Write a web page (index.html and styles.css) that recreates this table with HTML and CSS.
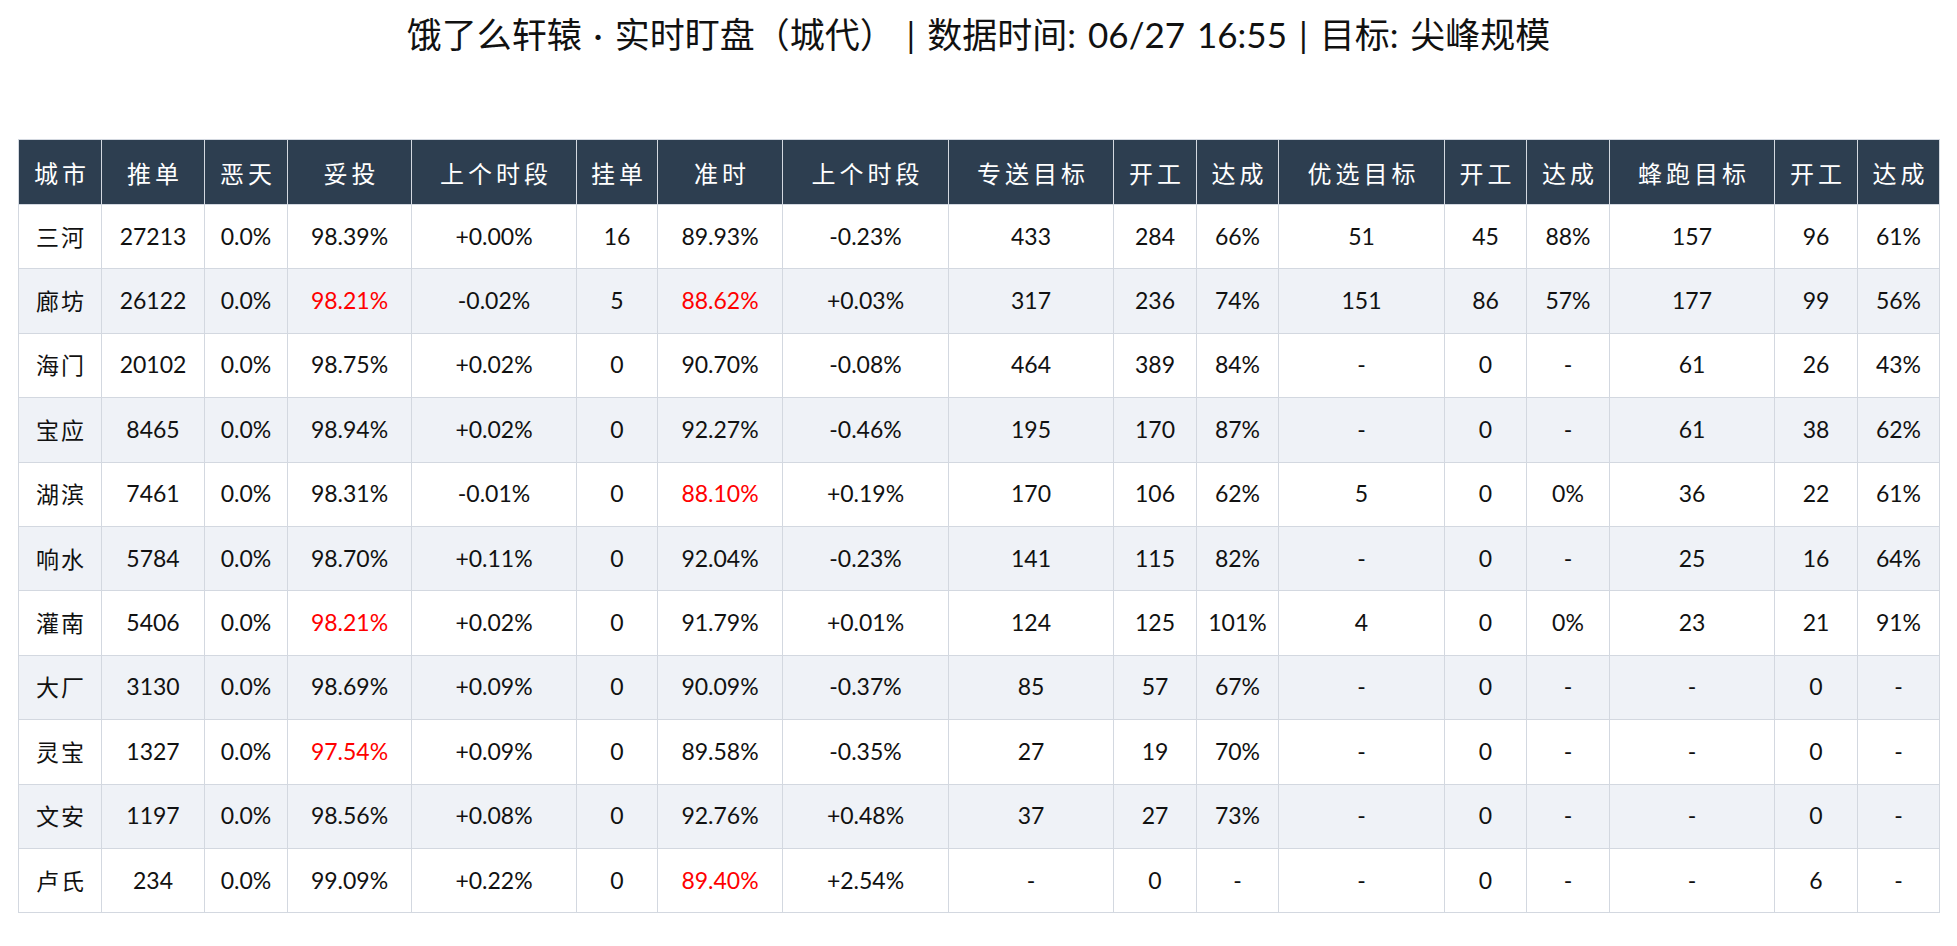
FILE: index.html
```html
<!DOCTYPE html>
<html lang="zh-CN">
<head>
<meta charset="utf-8">
<title>实时盯盘</title>
<link rel="stylesheet" href="styles.css">
</head>
<body>
<div class="page">
  <h1 class="title">饿了么轩辕 · 实时盯盘（城代） | 数据时间: 06/27 16:55 | 目标: 尖峰规模</h1>
  <table class="grid">
    <colgroup>
      <col class="c83"><col class="c103"><col class="c83"><col class="c124"><col class="c165">
      <col class="c81"><col class="c125"><col class="c166"><col class="c165"><col class="c83">
      <col class="c82"><col class="c166"><col class="c82"><col class="c83"><col class="c165">
      <col class="c83"><col class="c82">
    </colgroup>
    <thead>
      <tr>
        <th>城市</th><th>推单</th><th>恶天</th><th>妥投</th><th>上个时段</th><th>挂单</th><th>准时</th><th>上个时段</th><th>专送目标</th><th>开工</th><th>达成</th><th>优选目标</th><th>开工</th><th>达成</th><th>蜂跑目标</th><th>开工</th><th>达成</th>
      </tr>
    </thead>
    <tbody>
      <tr><td class="city">三河</td><td>27213</td><td>0.0%</td><td>98.39%</td><td>+0.00%</td><td>16</td><td>89.93%</td><td>-0.23%</td><td>433</td><td>284</td><td>66%</td><td>51</td><td>45</td><td>88%</td><td>157</td><td>96</td><td>61%</td></tr>
      <tr><td class="city">廊坊</td><td>26122</td><td>0.0%</td><td class="bad">98.21%</td><td>-0.02%</td><td>5</td><td class="bad">88.62%</td><td>+0.03%</td><td>317</td><td>236</td><td>74%</td><td>151</td><td>86</td><td>57%</td><td>177</td><td>99</td><td>56%</td></tr>
      <tr><td class="city">海门</td><td>20102</td><td>0.0%</td><td>98.75%</td><td>+0.02%</td><td>0</td><td>90.70%</td><td>-0.08%</td><td>464</td><td>389</td><td>84%</td><td>-</td><td>0</td><td>-</td><td>61</td><td>26</td><td>43%</td></tr>
      <tr><td class="city">宝应</td><td>8465</td><td>0.0%</td><td>98.94%</td><td>+0.02%</td><td>0</td><td>92.27%</td><td>-0.46%</td><td>195</td><td>170</td><td>87%</td><td>-</td><td>0</td><td>-</td><td>61</td><td>38</td><td>62%</td></tr>
      <tr><td class="city">湖滨</td><td>7461</td><td>0.0%</td><td>98.31%</td><td>-0.01%</td><td>0</td><td class="bad">88.10%</td><td>+0.19%</td><td>170</td><td>106</td><td>62%</td><td>5</td><td>0</td><td>0%</td><td>36</td><td>22</td><td>61%</td></tr>
      <tr><td class="city">响水</td><td>5784</td><td>0.0%</td><td>98.70%</td><td>+0.11%</td><td>0</td><td>92.04%</td><td>-0.23%</td><td>141</td><td>115</td><td>82%</td><td>-</td><td>0</td><td>-</td><td>25</td><td>16</td><td>64%</td></tr>
      <tr><td class="city">灌南</td><td>5406</td><td>0.0%</td><td class="bad">98.21%</td><td>+0.02%</td><td>0</td><td>91.79%</td><td>+0.01%</td><td>124</td><td>125</td><td>101%</td><td>4</td><td>0</td><td>0%</td><td>23</td><td>21</td><td>91%</td></tr>
      <tr><td class="city">大厂</td><td>3130</td><td>0.0%</td><td>98.69%</td><td>+0.09%</td><td>0</td><td>90.09%</td><td>-0.37%</td><td>85</td><td>57</td><td>67%</td><td>-</td><td>0</td><td>-</td><td>-</td><td>0</td><td>-</td></tr>
      <tr><td class="city">灵宝</td><td>1327</td><td>0.0%</td><td class="bad">97.54%</td><td>+0.09%</td><td>0</td><td>89.58%</td><td>-0.35%</td><td>27</td><td>19</td><td>70%</td><td>-</td><td>0</td><td>-</td><td>-</td><td>0</td><td>-</td></tr>
      <tr><td class="city">文安</td><td>1197</td><td>0.0%</td><td>98.56%</td><td>+0.08%</td><td>0</td><td>92.76%</td><td>+0.48%</td><td>37</td><td>27</td><td>73%</td><td>-</td><td>0</td><td>-</td><td>-</td><td>0</td><td>-</td></tr>
      <tr><td class="city">卢氏</td><td>234</td><td>0.0%</td><td>99.09%</td><td>+0.22%</td><td>0</td><td class="bad">89.40%</td><td>+2.54%</td><td>-</td><td>0</td><td>-</td><td>-</td><td>0</td><td>-</td><td>-</td><td>6</td><td>-</td></tr>
    </tbody>
  </table>
</div>
</body>
</html>
```

FILE: styles.css
```css
html, body {
  margin: 0;
  padding: 0;
  background: #ffffff;
}

.page {
  padding: 13px 18px 0 18px;
  font-family: Lato, "Noto Sans CJK SC", sans-serif;
  color: #111111;
}

.title {
  margin: 0;
  height: 42px;
  line-height: 42px;
  text-align: center;
  font-size: 35px;
  font-weight: normal;
  color: #111111;
  white-space: nowrap;
  word-spacing: 3px;
}

.grid {
  margin-top: 84px;
  width: 1921px;
  table-layout: fixed;
  border-collapse: collapse;
}

.c81 { width: 81px; }
.c82 { width: 82px; }
.c83 { width: 83px; }
.c103 { width: 103px; }
.c124 { width: 124px; }
.c125 { width: 125px; }
.c165 { width: 165px; }
.c166 { width: 166px; }

.grid th,
.grid td {
  border: 1px solid #d3d8e0;
  text-align: center;
  vertical-align: middle;
  white-space: nowrap;
}

.grid th {
  height: 64px;
  padding: 0;
  background: #2d3e50;
  color: #ffffff;
  font-weight: normal;
  font-size: 24px;
  letter-spacing: 4px;
  text-indent: 4px;
}

.grid td {
  height: 61.4px;
  padding: 0 0 2px 0;
  font-size: 23px;
  color: #111111;
}

.grid td.city {
  font-size: 23px;
  letter-spacing: 2px;
  text-indent: 2px;
}

.grid tbody tr:nth-child(even) td {
  background: #eff2f7;
}

.grid td.bad {
  color: #ff0000;
}
```
